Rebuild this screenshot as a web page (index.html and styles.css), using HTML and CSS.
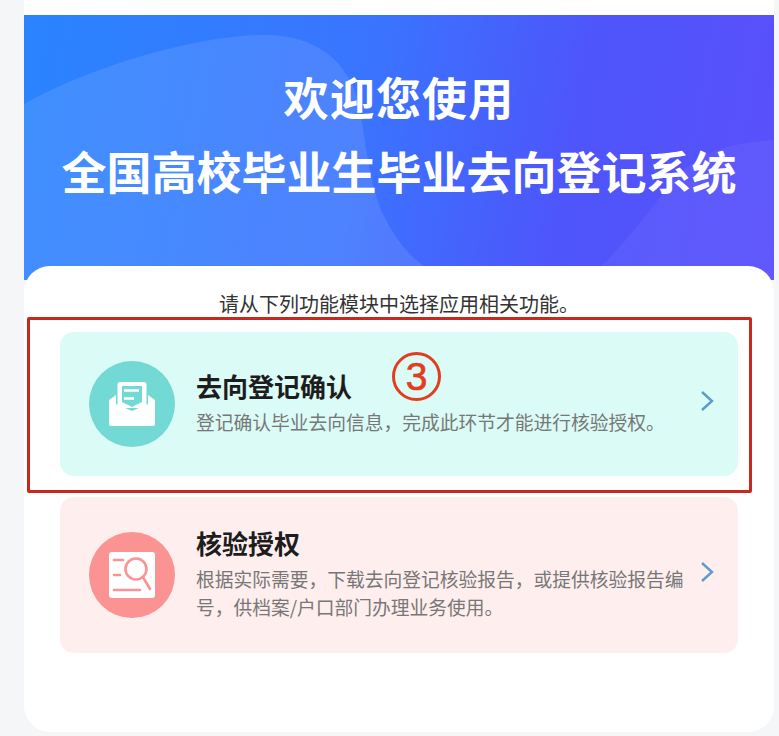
FILE: index.html
```html
<!DOCTYPE html>
<html lang="zh-CN">
<head>
<meta charset="utf-8">
<title>全国高校毕业生毕业去向登记系统</title>
<link rel="stylesheet" href="styles.css">
</head>
<body>
<div class="shell">
  <div class="top-strip"></div>
  <header class="banner">
    <svg class="banner-art" viewBox="0 0 750 265" preserveAspectRatio="none" aria-hidden="true">
      <path class="blob" d="M0 89C70 50 170 22 235 20C290 18 325 45 335 90C342 125 345 175 362 205C378 235 395 252 425 265H0Z"/>
      <path class="blob-soft" d="M750 125C710 128 675 135 650 165C625 195 590 245 560 265H750Z"/>
    </svg>
    <h1 class="title"><span class="title-welcome">欢迎您使用</span><span class="title-name">全国高校毕业生毕业去向登记系统</span></h1>
  </header>
  <main class="panel">
    <p class="lead">请从下列功能模块中选择应用相关功能。</p>
    <a class="module module-teal">
      <span class="module-icon">
        <svg viewBox="0 0 86 86" width="86" height="86" aria-hidden="true">
          <circle cx="43" cy="43" r="43" fill="#72d9d4"/>
          <rect x="28.5" y="21" width="29" height="26" rx="2.5" fill="#fff"/>
          <path d="M33 25H53V41L43 46L33 41Z" fill="#72d9d4"/>
          <path d="M35 29.5H50M35 37.5H45" stroke="#fff" stroke-width="2.4"/>
          <path d="M27 34L20 39V62.500A2.500 2.500 0 0 0 22.500 65H63.500A2.500 2.500 0 0 0 66 62.500V39L59 34V43L43 50L27 43Z" fill="#fff"/>
        </svg>
      </span>
      <span class="module-text">
        <strong class="module-title">去向登记确认</strong>
        <span class="module-desc">登记确认毕业去向信息，完成此环节才能进行核验授权。</span>
      </span>
      <svg class="chevron" viewBox="0 0 14 22" width="14" height="22" aria-hidden="true"><path d="M2 2L12 11L2 20"/></svg>
      <span class="mark-box"></span>
      <span class="mark-num">3</span>
    </a>
    <a class="module module-pink">
      <span class="module-icon">
        <svg viewBox="0 0 86 86" width="86" height="86" aria-hidden="true">
          <circle cx="43" cy="43" r="43" fill="#fb9393"/>
          <rect x="20" y="20" width="46" height="46" rx="3" fill="#fff"/>
          <path d="M25 28H34M25 43H31M25 58H51" stroke="#fb9393" stroke-width="2.600" stroke-linecap="round" fill="none"/>
          <circle cx="47" cy="37" r="10.500" stroke="#fb9393" stroke-width="2.600" fill="none"/>
          <path d="M54.500 46L61 57" stroke="#fb9393" stroke-width="2.600" stroke-linecap="round" fill="none"/>
        </svg>
      </span>
      <span class="module-text">
        <strong class="module-title">核验授权</strong>
        <span class="module-desc">根据实际需要，下载去向登记核验报告，或提供核验报告编号，供档案/户口部门办理业务使用。</span>
      </span>
      <svg class="chevron" viewBox="0 0 14 22" width="14" height="22" aria-hidden="true"><path d="M2 2L12 11L2 20"/></svg>
    </a>
  </main>
</div>
</body>
</html>
```
FILE: styles.css
```css
* { box-sizing: border-box; }
html, body { margin: 0; height: 100%; }
body {
  background: #f5f6f8;
  font-family: "Noto Sans CJK SC", "Noto Sans", sans-serif;
  overflow: hidden;
}
.shell { width: 750px; margin-left: 24px; }
.top-strip { height: 15px; background: #fff; }
.banner {
  position: relative;
  height: 265px;
  padding-top: 45px;
  background: linear-gradient(100deg, #2a84ff 0%, #3a74fe 45%, #4e55fb 72%, #5a50fb 100%);
  overflow: hidden;
}
.banner-art { position: absolute; inset: 0; width: 100%; height: 100%; }
.blob { fill: rgba(255, 255, 255, .1); }
.blob-soft { fill: rgba(255, 255, 255, .05); }
.title {
  position: relative;
  margin: 0;
  font-size: 45px;
  line-height: 74px;
  font-weight: 700;
  color: #fff;
  text-align: center;
}
.title-welcome, .title-name { display: block; }
.title-welcome { letter-spacing: 1.200px; }
.panel {
  position: relative;
  height: 466px;
  margin-top: -14px;
  padding: 25px 36px 0;
  background: #fff;
  border-radius: 26px;
}
.lead {
  margin: 0 0 15px;
  font-size: 20px;
  line-height: 26px;
  color: #333;
  text-align: center;
  white-space: nowrap;
}
.module {
  position: relative;
  display: flex;
  align-items: center;
  border-radius: 14px;
  padding: 0 24px 0 29px;
}
.module-teal { height: 144px; margin-bottom: 21px; background: #dbfbf6; }
.module-pink { height: 156px; background: #ffeeee; }
.module-icon { flex: none; width: 86px; height: 86px; margin-right: 22px; }
.module-icon svg { display: block; }
.module-text { flex: 1; display: flex; flex-direction: column; gap: 5px; min-width: 0; padding: 0 8px 3px 0; margin-left: -1px; }
.module-title { font-size: 26px; line-height: 34px; font-weight: 700; color: #1d1d1d; }
.module-desc { font-size: 18.750px; line-height: 28px; color: #777; }
.chevron { flex: none; margin-bottom: 6px; }
.chevron path { fill: none; stroke: #5a9bd0; stroke-width: 2.400; }
.mark-box {
  position: absolute;
  left: -33px;
  top: -15px;
  width: 725px;
  height: 176px;
  border: 3px solid #c9281e;
  border-radius: 2px;
}
.mark-num {
  position: absolute;
  left: 332px;
  top: 20px;
  width: 49px;
  height: 49px;
  border: 3px solid #e33d20;
  border-radius: 50%;
  font-family: "Liberation Sans", sans-serif;
  font-size: 39px;
  line-height: 43px;
  text-align: center;
  color: #e33d20;
  -webkit-text-stroke: 0.7px #e33d20;
}
```
